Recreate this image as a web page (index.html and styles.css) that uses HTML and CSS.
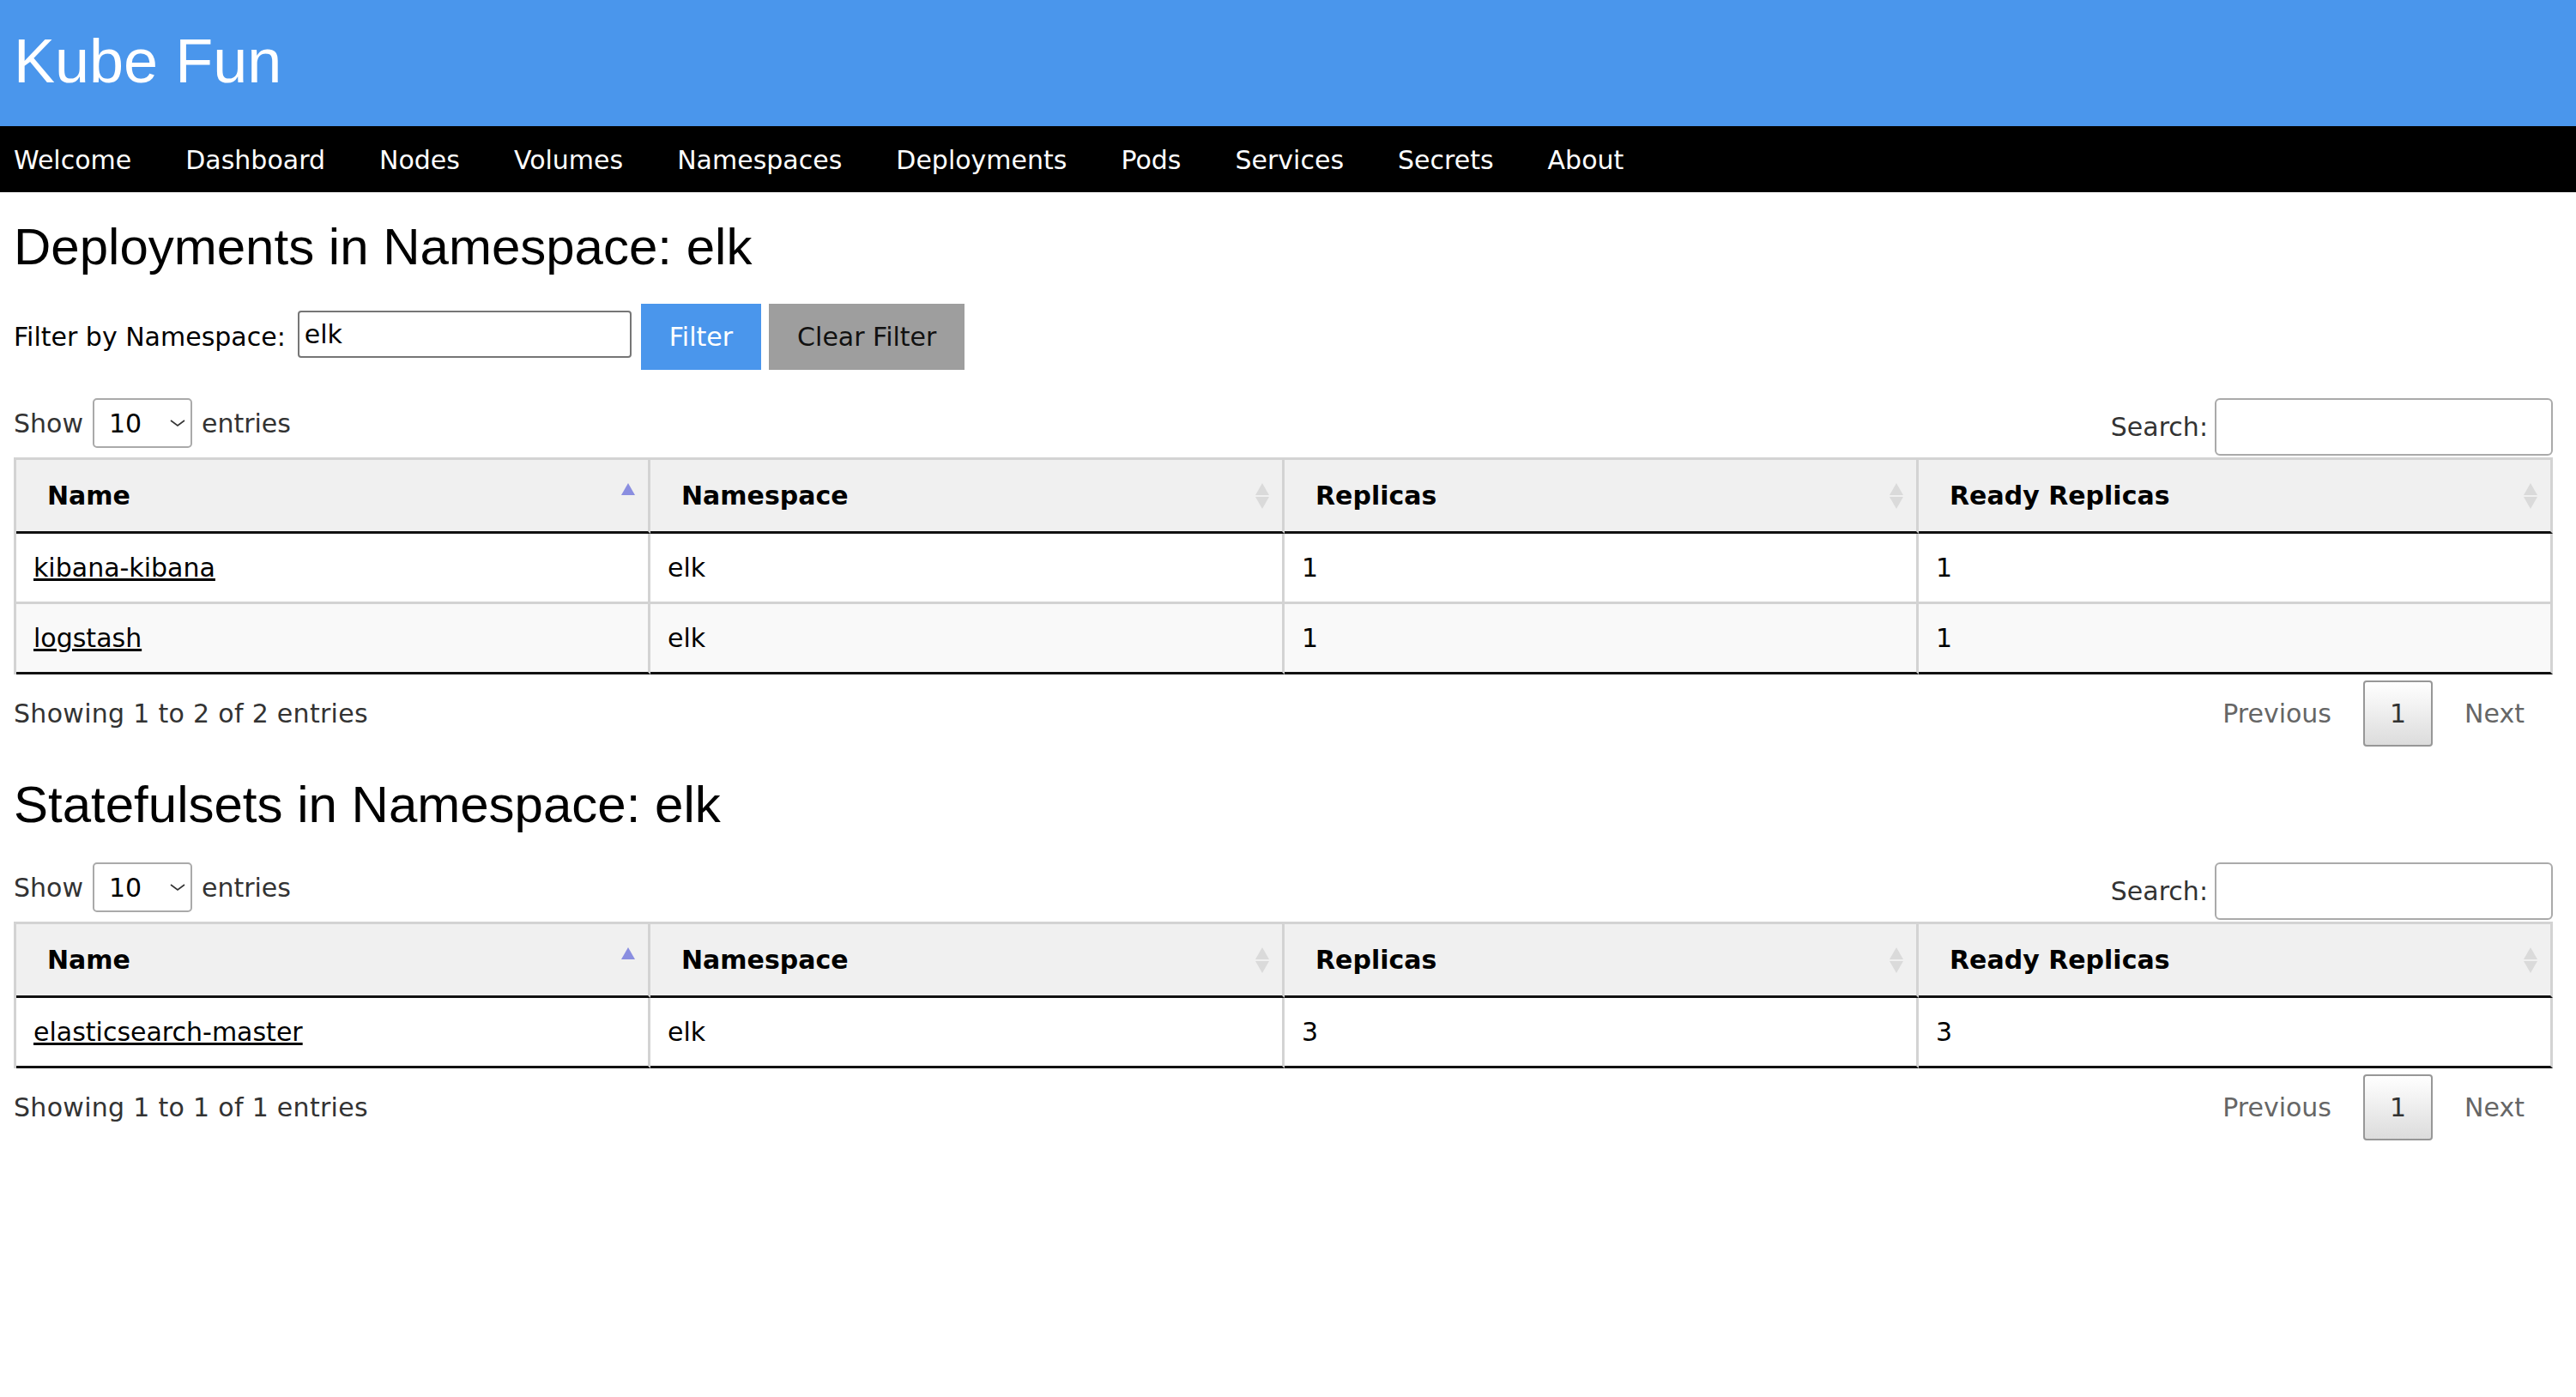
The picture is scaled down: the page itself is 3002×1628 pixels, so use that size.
FILE: index.html
```html
<!DOCTYPE html>
<html lang="en">
<head>
<meta charset="utf-8">
<title>Kube Fun</title>
<link rel="stylesheet" href="styles.css">
</head>
<body>
<header class="site-header"><h1 class="brand">Kube Fun</h1></header>
<nav class="site-nav">
  <a href="#">Welcome</a>
  <a href="#">Dashboard</a>
  <a href="#">Nodes</a>
  <a href="#">Volumes</a>
  <a href="#">Namespaces</a>
  <a href="#">Deployments</a>
  <a href="#">Pods</a>
  <a href="#">Services</a>
  <a href="#">Secrets</a>
  <a href="#">About</a>
</nav>
<main class="content">
  <section class="section">
    <h2 class="section-title">Deployments in Namespace: elk</h2>
    <form class="filter-form">
      <label class="filter-label" for="ns">Filter by Namespace:</label>
      <input id="ns" class="filter-input" type="text" value="elk">
      <button class="btn btn-primary" type="button">Filter</button>
      <button class="btn btn-secondary" type="button">Clear Filter</button>
    </form>
    <div class="dt-wrapper">
      <div class="dt-top">
        <div class="dt-length">Show
          <span class="select-wrap"><select class="dt-select"><option>10</option></select><svg class="chev" viewBox="0 0 18 8" width="18" height="8"><path d="M1 1 L9 7 L17 1" fill="none" stroke="#333" stroke-width="1.6"/></svg></span>
          entries</div>
        <div class="dt-search"><label>Search:</label><input class="search-input" type="search"></div>
      </div>
      <table class="dt-table">
        <thead>
          <tr>
            <th class="sorted-asc">Name<svg class="sort" viewBox="0 0 16 30" width="16" height="30"><path class="up" d="M0 14 L8 0 L16 14 Z"/><path class="down" d="M0 16 L16 16 L8 30 Z"/></svg></th>
            <th>Namespace<svg class="sort" viewBox="0 0 16 30" width="16" height="30"><path class="up" d="M0 14 L8 0 L16 14 Z"/><path class="down" d="M0 16 L16 16 L8 30 Z"/></svg></th>
            <th>Replicas<svg class="sort" viewBox="0 0 16 30" width="16" height="30"><path class="up" d="M0 14 L8 0 L16 14 Z"/><path class="down" d="M0 16 L16 16 L8 30 Z"/></svg></th>
            <th>Ready Replicas<svg class="sort" viewBox="0 0 16 30" width="16" height="30"><path class="up" d="M0 14 L8 0 L16 14 Z"/><path class="down" d="M0 16 L16 16 L8 30 Z"/></svg></th>
          </tr>
        </thead>
        <tbody>
          <tr><td><a href="#">kibana-kibana</a></td><td>elk</td><td>1</td><td>1</td></tr>
          <tr><td><a href="#">logstash</a></td><td>elk</td><td>1</td><td>1</td></tr>
        </tbody>
      </table>
      <div class="dt-bottom">
        <div class="dt-info">Showing 1 to 2 of 2 entries</div>
        <div class="dt-paginate"><a class="pg disabled">Previous</a><a class="pg current">1</a><a class="pg disabled">Next</a></div>
      </div>
    </div>
  </section>

  <section class="section">
    <h2 class="section-title">Statefulsets in Namespace: elk</h2>
    <div class="dt-wrapper">
      <div class="dt-top">
        <div class="dt-length">Show
          <span class="select-wrap"><select class="dt-select"><option>10</option></select><svg class="chev" viewBox="0 0 18 8" width="18" height="8"><path d="M1 1 L9 7 L17 1" fill="none" stroke="#333" stroke-width="1.6"/></svg></span>
          entries</div>
        <div class="dt-search"><label>Search:</label><input class="search-input" type="search"></div>
      </div>
      <table class="dt-table">
        <thead>
          <tr>
            <th class="sorted-asc">Name<svg class="sort" viewBox="0 0 16 30" width="16" height="30"><path class="up" d="M0 14 L8 0 L16 14 Z"/><path class="down" d="M0 16 L16 16 L8 30 Z"/></svg></th>
            <th>Namespace<svg class="sort" viewBox="0 0 16 30" width="16" height="30"><path class="up" d="M0 14 L8 0 L16 14 Z"/><path class="down" d="M0 16 L16 16 L8 30 Z"/></svg></th>
            <th>Replicas<svg class="sort" viewBox="0 0 16 30" width="16" height="30"><path class="up" d="M0 14 L8 0 L16 14 Z"/><path class="down" d="M0 16 L16 16 L8 30 Z"/></svg></th>
            <th>Ready Replicas<svg class="sort" viewBox="0 0 16 30" width="16" height="30"><path class="up" d="M0 14 L8 0 L16 14 Z"/><path class="down" d="M0 16 L16 16 L8 30 Z"/></svg></th>
          </tr>
        </thead>
        <tbody>
          <tr><td><a href="#">elasticsearch-master</a></td><td>elk</td><td>3</td><td>3</td></tr>
        </tbody>
      </table>
      <div class="dt-bottom">
        <div class="dt-info">Showing 1 to 1 of 1 entries</div>
        <div class="dt-paginate"><a class="pg disabled">Previous</a><a class="pg current">1</a><a class="pg disabled">Next</a></div>
      </div>
    </div>
  </section>
</main>
</body>
</html>
```

FILE: styles.css
```css
html, body {
  margin: 0;
  padding: 0;
  background: #fff;
}

body {
  font-family: "DejaVu Sans", Verdana, sans-serif;
  font-size: 30px;
  line-height: 35px;
  color: #000;
}

.site-header {
  background: #4a96ec;
  height: 147px;
  box-sizing: border-box;
  padding: 30px 16px 0 16px;
}

.brand {
  margin: 0;
  font-family: "Liberation Sans", Arial, sans-serif;
  font-weight: 400;
  font-size: 72px;
  line-height: 83px;
  color: #fff;
}

.site-nav {
  background: #000;
  display: flex;
  gap: 63px;
  padding: 22px 16px 20px;
  line-height: 35px;
}

.site-nav a {
  color: #fff;
  text-decoration: none;
}

.content {
  padding: 0 27px 0 16px;
}

.section + .section {
  padding-top: 4px;
}

.section-title {
  font-family: "Liberation Sans", Arial, sans-serif;
  font-weight: 400;
  font-size: 60px;
  line-height: 69px;
  margin: 29px 0 0;
}

.filter-form {
  display: flex;
  align-items: center;
  height: 77px;
  margin: 32px 0 10px;
}

.filter-label {
  margin-right: 14px;
}

.filter-input {
  width: 389px;
  height: 55px;
  box-sizing: border-box;
  border: 2px solid #767676;
  border-radius: 4px;
  font: inherit;
  padding: 0 6px;
  margin: 0 11px 6px 0;
  color: #000;
}

.btn {
  height: 77px;
  border: 0;
  padding: 0 33px;
  font: inherit;
  cursor: pointer;
}

.btn-primary {
  background: #4a96ec;
  color: #fff;
  margin-right: 9px;
}

.btn-secondary {
  background: #9e9e9e;
  color: #111;
}

.dt-top {
  display: flex;
  justify-content: space-between;
  align-items: flex-start;
  margin-top: 33px;
  color: #333;
}

.dt-length {
  display: flex;
  align-items: center;
  gap: 11px;
  height: 58px;
}

.select-wrap {
  position: relative;
  display: inline-block;
}

.dt-select {
  appearance: none;
  -webkit-appearance: none;
  width: 116px;
  height: 58px;
  box-sizing: border-box;
  border: 2px solid #aaa;
  border-radius: 5px;
  background: #fff;
  font: inherit;
  color: #000;
  padding: 0 0 0 17px;
}

.chev {
  position: absolute;
  right: 8px;
  top: 25px;
  pointer-events: none;
}

.dt-search {
  display: flex;
  align-items: center;
  gap: 8px;
  height: 67px;
}

.search-input {
  width: 394px;
  height: 67px;
  box-sizing: border-box;
  border: 2px solid #aaa;
  border-radius: 6px;
  font: inherit;
  padding: 0 8px;
}

.dt-table {
  width: 100%;
  table-layout: fixed;
  border-collapse: separate;
  border-spacing: 0;
  margin-top: 2px;
  border-top: 3px solid #d3d3d3;
  border-left: 3px solid #d3d3d3;
}

.dt-table th {
  position: relative;
  background: #f0f0f0;
  text-align: left;
  font-weight: 700;
  height: 83px;
  box-sizing: content-box;
  padding: 0 36px;
  border-right: 3px solid #d3d3d3;
  border-bottom: 3px solid #111;
}

.dt-table th .sort {
  position: absolute;
  right: 15px;
  top: 50%;
  transform: translateY(-50%);
}

.sort path {
  fill: #dadada;
}

.sorted-asc .sort .up {
  fill: #8a8ee0;
}

.sorted-asc .sort .down {
  fill: transparent;
}

.dt-table td {
  height: 79px;
  padding: 0 20px;
  border-right: 3px solid #d3d3d3;
  border-bottom: 3px solid #d3d3d3;
}

.dt-table tbody tr:nth-child(even) td {
  background: #f9f9f9;
}

.dt-table tbody tr:last-child td {
  border-bottom-color: #111;
}

.dt-table td a {
  color: #000;
  text-decoration: underline;
}

.dt-bottom {
  display: flex;
  justify-content: space-between;
  align-items: center;
  height: 77px;
  margin-top: 7px;
  color: #333;
}

.dt-info {
  letter-spacing: 0.3px;
}

.dt-paginate {
  display: flex;
  align-items: center;
}

.pg {
  box-sizing: border-box;
  height: 77px;
  display: flex;
  align-items: center;
  padding: 0 31px;
  margin-left: 4px;
  color: #666;
  border: 2px solid transparent;
  border-radius: 4px;
}

.pg.current {
  padding: 0 29px;
  color: #333;
  border-color: #979797;
  background: linear-gradient(to bottom, #fff 0%, #dcdcdc 100%);
}
```
